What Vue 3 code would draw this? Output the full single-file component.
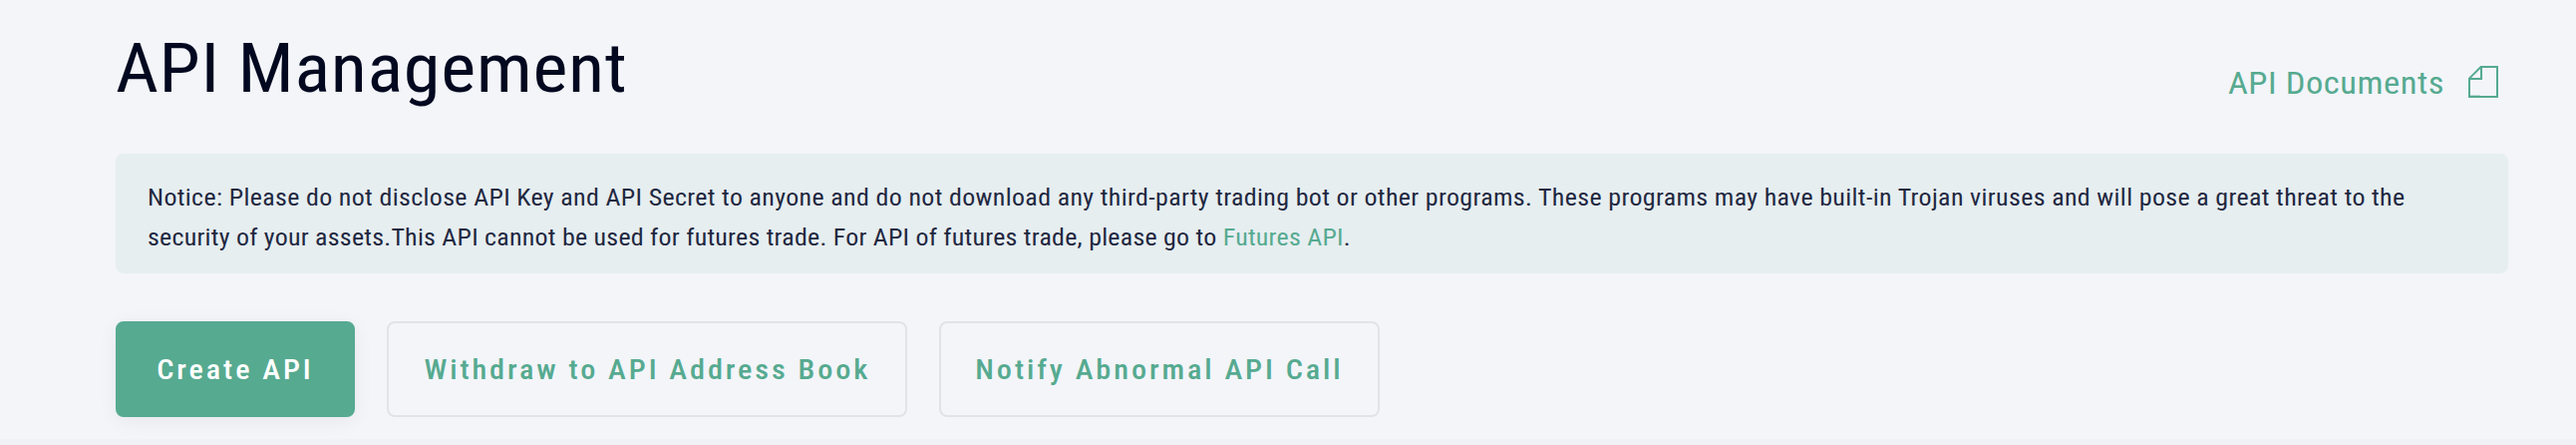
<script setup>
import { ref } from 'vue';

const buttons = ref([
  { label: 'Create API', name: 'create' },
  { label: 'Withdraw to API Address Book', name: 'withdraw' },
  { label: 'Notify Abnormal API Call', name: 'notify' },
]);
</script>

<template>
  <main class="page">
    <header class="header">
      <h1 class="title">API Management</h1>
      <a class="docs" href="#">
        <span class="docs__text">API Documents</span>
        <svg class="docs__icon" width="30" height="32" viewBox="0 0 30 32" fill="none">
          <path d="M1 12.6V31H29V1H12.6Z" stroke="currentColor" stroke-width="2" />
          <path d="M13 1V13H1" stroke="currentColor" stroke-width="2" />
          <path d="M2 29.5H12" stroke="currentColor" stroke-opacity="0.3" />
        </svg>
      </a>
    </header>

    <section class="notice">
      <p class="notice__line notice__line--first">
        Notice: Please do not disclose API Key and API Secret to anyone and do not download any third-party trading bot or other programs. These programs may have built-in Trojan viruses and will pose a great threat to the
      </p>
      <p class="notice__line notice__line--last">
        security of your assets.This API cannot be used for futures trade. For API of futures trade, please go to <a class="notice__link" href="#">Futures API</a>.
      </p>
    </section>

    <div class="actions">
      <button
        v-for="button in buttons"
        :key="button.name"
        type="button"
        :class="['button', `button--${button.name}`]">
        <span class="button__label">{{ button.label }}</span>
      </button>
    </div>
  </main>
</template>

<style>
body {
  margin: 0;
  background: #f3f5f9;
}
</style>

<style scoped>
.page {
  box-sizing: border-box;
  height: 446px;
  padding: 0 68px 0 116px;
  border-bottom: 6px solid #f1f2f7;
  overflow: hidden;
  background: #f3f5f9;
  font-family: 'Roboto Condensed', Roboto, 'Liberation Sans', sans-serif;
  font-stretch: 75%;
}

/* condensed face, opened up a little */
.title,
.docs__text,
.notice__line,
.button__label {
  transform: scaleX(1.08);
}

.header {
  display: flex;
  justify-content: space-between;
  height: 154px;
}

.title {
  margin: 0;
  padding-top: 29px;
  color: #02081f;
  font-size: 69px;
  font-weight: 400;
  line-height: 80px;
  letter-spacing: 0.58px;
  transform-origin: left;
}

.docs {
  display: flex;
  align-items: flex-start;
  gap: 24px;
  padding: 66px 10px 0 0;
  color: #56aa90;
  text-decoration: none;
}

.docs__text {
  font-size: 32px;
  line-height: 34px;
  letter-spacing: 0.48px;
  transform-origin: right;
}

.docs__icon {
  display: block;
}

.notice {
  box-sizing: border-box;
  height: 120px;
  padding: 24px 32px 0;
  border-radius: 8px;
  background: #e6eef0;
}

.notice__line {
  width: max-content;
  margin: 0;
  color: #1f2740;
  font-size: 24px;
  line-height: 40px;
  white-space: nowrap;
  transform-origin: left;
}

.notice__line--first {
  letter-spacing: 0.33px;
}

.notice__line--last {
  letter-spacing: 0.23px;
}

.notice__link {
  color: #56aa90;
  text-decoration: none;
}

.actions {
  display: flex;
  gap: 32px;
  padding-top: 48px;
}

.button {
  box-sizing: border-box;
  height: 96px;
  padding: 0;
  border: 2px solid #e1e3e7;
  border-radius: 8px;
  background: transparent;
  color: #56aa90;
  font-family: inherit;
  font-size: 28px;
  font-weight: 500;
  font-stretch: inherit;
  letter-spacing: 2.7px;
  white-space: nowrap;
  cursor: pointer;
}

.button__label {
  display: inline-block;
}

.button--create {
  width: 240px;
  border-color: #56aa90;
  background: #56aa90;
  box-shadow: 0 4px 20px rgba(0, 0, 0, 0.06);
  color: #fff;
}

.button--withdraw {
  width: 522px;
}

.button--notify {
  width: 442px;
}
</style>
